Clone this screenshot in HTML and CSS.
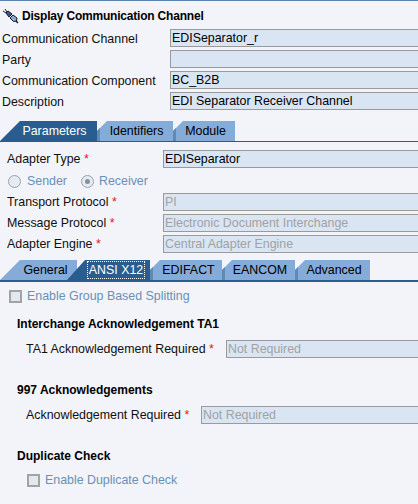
FILE: index.html
```html
<!DOCTYPE html>
<html lang="en">
<head>
<meta charset="utf-8">
<title>Display Communication Channel</title>
<link rel="stylesheet" href="styles.css">
</head>
<body>
<div class="page">
  <h1 class="title">
    <svg class="plug" width="18" height="18" viewBox="0 0 18 18" aria-hidden="true">
      <path d="M0 3l3 2M2 1l2 3" stroke="#1c2433" stroke-width="1" fill="none"/>
      <path d="M3 5l2-2 4 3-3 3z" fill="#3f5a8c" stroke="#10182a" stroke-width="1"/>
      <path d="M7 10l3-3 4 3-.5 3-3 .5z" fill="#8ea6d0" stroke="#10182a" stroke-width="1"/>
      <path d="M13 13l2 2" stroke="#10182a" stroke-width="1.500"/>
    </svg>
    <span>Display Communication Channel</span>
  </h1>
  <div class="head-form">
    <div class="row"><label>Communication Channel</label><div class="field">EDISeparator_r</div></div>
    <div class="row"><label>Party</label><div class="field"></div></div>
    <div class="row"><label>Communication Component</label><div class="field">BC_B2B</div></div>
    <div class="row"><label>Description</label><div class="field">EDI Separator Receiver Channel</div></div>
  </div>
  <div class="tabs tabs-main">
    <div class="tab active first w-params">Parameters</div>
    <div class="tab w-ident">Identifiers</div>
    <div class="tab w-module">Module</div>
  </div>
  <div class="params">
    <div class="row"><label>Adapter Type <b>*</b></label><div class="field">EDISeparator</div></div>
    <div class="radios">
      <span class="radio"></span><span class="dim r-sender">Sender</span>
      <span class="radio on"></span><span class="dim">Receiver</span>
    </div>
    <div class="row"><label>Transport Protocol <b>*</b></label><div class="field off">PI</div></div>
    <div class="row"><label>Message Protocol <b>*</b></label><div class="field off">Electronic Document Interchange</div></div>
    <div class="row"><label>Adapter Engine <b>*</b></label><div class="field off">Central Adapter Engine</div></div>
  </div>
  <div class="tabs tabs-sub">
    <div class="tab first w-general">General</div>
    <div class="tab active w-ansi"><span class="focus">ANSI X12</span></div>
    <div class="tab w-edifact">EDIFACT</div>
    <div class="tab w-eancom">EANCOM</div>
    <div class="tab w-adv">Advanced</div>
  </div>
  <div class="check top-check"><span class="box"></span><span class="dim">Enable Group Based Splitting</span></div>
  <h2 class="section s-ta1">Interchange Acknowledgement TA1</h2>
  <div class="row sub-row"><label class="l-ta1">TA1 Acknowledgement Required <b>*</b></label><div class="field off">Not Required</div></div>
  <h2 class="section s-997">997 Acknowledgements</h2>
  <div class="row sub-row"><label class="l-ack">Acknowledgement Required <b>*</b></label><div class="field off">Not Required</div></div>
  <h2 class="section s-dup">Duplicate Check</h2>
  <div class="check dup-check"><span class="box"></span><span class="dim">Enable Duplicate Check</span></div>
</div>
</body>
</html>
```
FILE: styles.css
```css
html, body { margin: 0; padding: 0; }
body { width: 418px; height: 504px; overflow: hidden; background: #f2f4f9; }
.page {
  border-top: 1px solid #5a82b0;
  height: 503px; overflow: hidden;
  font: 12.4px/17px "Liberation Sans", Arial, sans-serif;
  color: #000;
}
.title {
  display: flex; align-items: center; gap: 1px;
  box-sizing: border-box;
  margin: 0; height: 28px; padding: 2px 0 0 3px;
  font-size: 12px; font-weight: bold; letter-spacing: -0.2px;
}
.plug { flex: none; margin-top: 2px; }
.row { display: flex; height: 18px; }
.row label { white-space: nowrap; flex: none; line-height: 19px; color: #101010; box-sizing: border-box; }
.row b { color: #d22; font-weight: normal; }
.field {
  flex: 1; min-width: 0; white-space: nowrap; overflow: hidden;
  box-sizing: border-box; height: 18px; line-height: 17px;
  background: #d9e5f3; padding-left: 1px;
  border: solid #9a9a9a; border-width: 1px 0 1px 1px;
}
.field.off { color: #a2a2a2; background: #d9e5f3; }
.head-form { display: flex; flex-direction: column; gap: 3px; }
.head-form label { width: 170px; padding: 1px 0 0 2px; line-height: 18px; }
.tabs { display: flex; box-sizing: content-box; border-bottom: 2px solid #2a5d8f; height: 20px; }
.tabs-main { margin-top: 11px; border-bottom-width: 1px; }
.tab {
  box-sizing: border-box; height: 20px; line-height: 20px; text-align: center;
  background: #85acd9; color: #000; flex: none; white-space: nowrap;
  clip-path: polygon(10px 0, 100% 0, 100% 100%, 0 100%, 0 10px);
  border-left: 3px solid #5f8ab8;
}
.tab.first { clip-path: polygon(20px 0, 100% 0, 100% 100%, 0 100%); padding-left: 12px; border-left: 0; }
.tab.active { background: #2a5d8f; color: #fff; border-left: 0; }
.w-params { width: 97px; }
.w-ident { width: 76px; }
.w-module { width: 62px; }
.tab.w-general { width: 77px; padding-left: 14px; }
.w-ansi { width: 83px; clip-path: polygon(18px 0, 100% 0, 100% 100%, 0 100%); padding-left: 15px; margin-left: -10px; }
.w-edifact { width: 72px; padding-left: 2px; }
.w-eancom { width: 73px; }
.w-adv { width: 75px; }
.focus { outline: 1px dotted #fff; outline-offset: 0; padding: 1px; }
.params { padding-top: 8px; }
.params .row { margin-bottom: 3px; }
.params label { width: 163px; padding-left: 7px; }
.radios { display: flex; align-items: center; height: 22px; padding-left: 8px; margin-bottom: 1px; margin-top: -1px; }
.radio {
  width: 11px; height: 11px; border-radius: 50%; border: 1px solid #9aa0a8;
  background: #e4ebf3; flex: none; margin-right: 6px; position: relative;
}
.radio.on { margin-right: 5px; }
.radio.on::after {
  content: ""; position: absolute; left: 3px; top: 3px; width: 5px; height: 5px;
  border-radius: 50%; background: #8a8f96;
}
.r-sender { margin-right: 14px; }
.dim { color: #6a90b8; }
.tabs-sub { margin-top: 7px; }
.check { display: flex; align-items: center; }
.box {
  width: 9px; height: 9px; border: 2px solid #a3a3a3; background: #e1e8f0;
  flex: none; margin-right: 5px;
}
.top-check { padding: 6px 0 0 9px; }
.section { margin: 0; font-size: 12px; line-height: 16px; font-weight: bold; padding-left: 17px; }
.s-ta1 { margin-top: 11px; }
.s-997 { margin-top: 24px; }
.s-dup { margin-top: 24px; }
.sub-row { padding-left: 26px; margin-top: 8px; }
.l-ta1 { width: 200px; }
.l-ack { width: 175px; }
.dup-check { padding: 8px 0 0 27px; }
```
